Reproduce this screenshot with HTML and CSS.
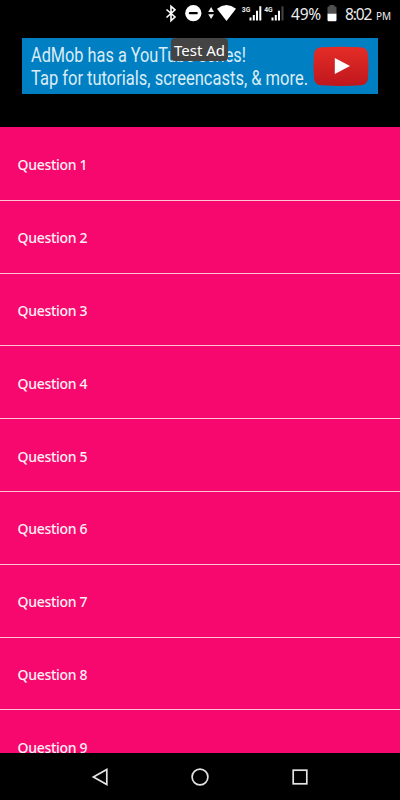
FILE: index.html
```html
<!DOCTYPE html>
<html lang="en">
<head>
    <meta charset="UTF-8">
    <title>Questions</title>
    <link rel="stylesheet" href="styles.css">
</head>
<body>
<div class="screen">
    <div class="status-bar">
        <svg class="status-icons" width="120" height="28" viewBox="165 0 120 28">
            <!-- bluetooth -->
            <path d="M166.500 9.500l8.500 7.500-4 3.700V6.300l4 3.500-8.500 7.700" fill="none" stroke="#fff" stroke-width="1.600"/>
            <!-- do not disturb -->
            <circle cx="193.300" cy="13.200" r="8.100" fill="#fff"/>
            <rect x="188.800" y="12" width="9" height="2.200" rx="1" fill="#000"/>
            <!-- wifi -->
            <path d="M208.200 12l2.900-5 2.900 5zM208.200 14.200h5.800l-2.900 4.800z" fill="#eee"/>
            <path d="M217 8.700q9.500-7.200 19 0L226.500 21z" fill="#fff"/>
            <!-- signal -->
            <text class="net" x="241.800" y="12" textLength="8.500" lengthAdjust="spacingAndGlyphs">3G</text>
            <path d="M249.500 17.500h2V20.500h-2zM252.800 15h2v5.500h-2zM256 10.800h2v9.700h-2zM259.300 6.300h2v14.200h-2z" fill="#fff"/>
            <text class="net" x="264.200" y="12" textLength="8.500" lengthAdjust="spacingAndGlyphs">4G</text>
            <path d="M271.500 17.500h2V20.500h-2zM274.800 15h2v5.500h-2zM278 10.800h2v9.700h-2z" fill="#fff"/>
            <path d="M281.500 6.300h2v14.200h-2z" fill="#444"/>
        </svg>
        <span class="percent">49%</span>
        <svg class="battery" width="10" height="17" viewBox="0 0 10 17">
            <path d="M2.500 0h4.800v1.600h1q1.200 0 1.200 1.200V9H.5V2.800q0-1.200 1.200-1.200h.8z" fill="#505050"/>
            <path d="M.5 8.700h9V15q0 1.200-1.200 1.200H1.700Q.5 16.200.5 15z" fill="#fff"/>
        </svg>
        <span class="time">8:02</span>
        <span class="pm">PM</span>
    </div>
    <div class="ad">
        <svg class="ad-text" width="285" height="56">
            <text x="9" y="23.500" textLength="215" lengthAdjust="spacingAndGlyphs">AdMob has a YouTube series!</text>
            <text x="9" y="47" textLength="277" lengthAdjust="spacingAndGlyphs">Tap for tutorials, screencasts, &amp; more.</text>
        </svg>
        <svg class="ad-logo" width="57" height="41" viewBox="0 0 57 41">
            <defs>
                <linearGradient id="red" x1="0" y1="0" x2="0" y2="1">
                    <stop offset="0" stop-color="#e52d27"/>
                    <stop offset="1" stop-color="#bf171d"/>
                </linearGradient>
            </defs>
            <path d="M8 1.300Q28 0 48 1.300q6.500.5 7 7 1 12 0 24-.5 6.500-7 7-20 1.200-40 0-6.500-.5-7-7-1-12 0-24 .5-6.500 7-7z" fill="url(#red)"/>
            <path d="M21.800 12v16l15.200-8z" fill="#fff"/>
        </svg>
        <div class="ad-label">Test Ad</div>
    </div>
    <div class="list">
        <div class="row">Question 1</div>
        <div class="row">Question 2</div>
        <div class="row">Question 3</div>
        <div class="row">Question 4</div>
        <div class="row">Question 5</div>
        <div class="row">Question 6</div>
        <div class="row">Question 7</div>
        <div class="row">Question 8</div>
        <div class="row">Question 9</div>
    </div>
    <div class="nav-bar">
        <svg width="20" height="20" viewBox="0 0 20 20"><path d="M3.400 10L16.800 2.500v15z"/></svg>
        <svg width="20" height="20" viewBox="0 0 20 20"><circle cx="10" cy="10" r="7.900"/></svg>
        <svg width="20" height="20" viewBox="0 0 20 20"><rect x="3.200" y="3.200" width="13.600" height="13.600"/></svg>
    </div>
</div>
</body>
</html>
```
FILE: styles.css
```css
* {
    margin: 0;
    padding: 0;
    box-sizing: border-box;
}

body {
    background-color: #000;
    color: #fff;
    font-family: "Noto Sans", sans-serif;
}

svg {
    display: block;
    flex-shrink: 0;
}

.screen {
    width: 400px;
    height: 800px;
    display: flex;
    flex-direction: column;
    overflow: hidden;
}

.status-bar {
    display: flex;
    align-items: center;
    height: 28px;
    padding-left: 165px;
    white-space: nowrap;
    color: #eee;
}
.net {
    font: bold 8px Roboto, sans-serif;
    fill: #eee;
}
.percent {
    width: 36px;
    margin-left: 6px;
    font-size: 15.5px;
    letter-spacing: -0.2px;
}
.battery {
    margin-top: -2px;
}
.time {
    width: 31px;
    margin-left: 8px;
    font-size: 15.5px;
    letter-spacing: -1.1px;
}
.pm {
    padding-top: 3px;
    font-size: 10px;
}

.ad {
    position: relative;
    display: flex;
    align-items: center;
    width: 356px;
    height: 56px;
    margin: 10px 0 33px 22px;
    background-color: #0080c3;
}
.ad-text {
    overflow: visible;
    font-family: Roboto, sans-serif;
    font-size: 19.5px;
    fill: #dcecf5;
}
.ad-logo {
    margin-left: 6px;
}
.ad-label {
    position: absolute;
    top: 0;
    left: 149px;
    width: 57px;
    height: 23px;
    border-radius: 4px;
    background-color: #444;
    font-size: 15px;
    line-height: 25px;
    text-align: center;
    white-space: nowrap;
}

.list {
    flex: 1;
    overflow: hidden;
    padding-top: 1px;
    background-color: #f7086e;
}
.row {
    display: flex;
    align-items: center;
    height: 72.8px;
    padding: 2px 0 0 17.5px;
    border-bottom: 1px solid #ffc4d4;
    color: #fff0f5;
    font-size: 14px;
    font-weight: 500;
    letter-spacing: -0.3px;
}

.nav-bar {
    display: flex;
    justify-content: center;
    align-items: center;
    gap: 80px;
    height: 47px;
    background-color: #000;
}
.nav-bar svg {
    fill: none;
    stroke: #e4e4e4;
    stroke-width: 1.7;
}
```
